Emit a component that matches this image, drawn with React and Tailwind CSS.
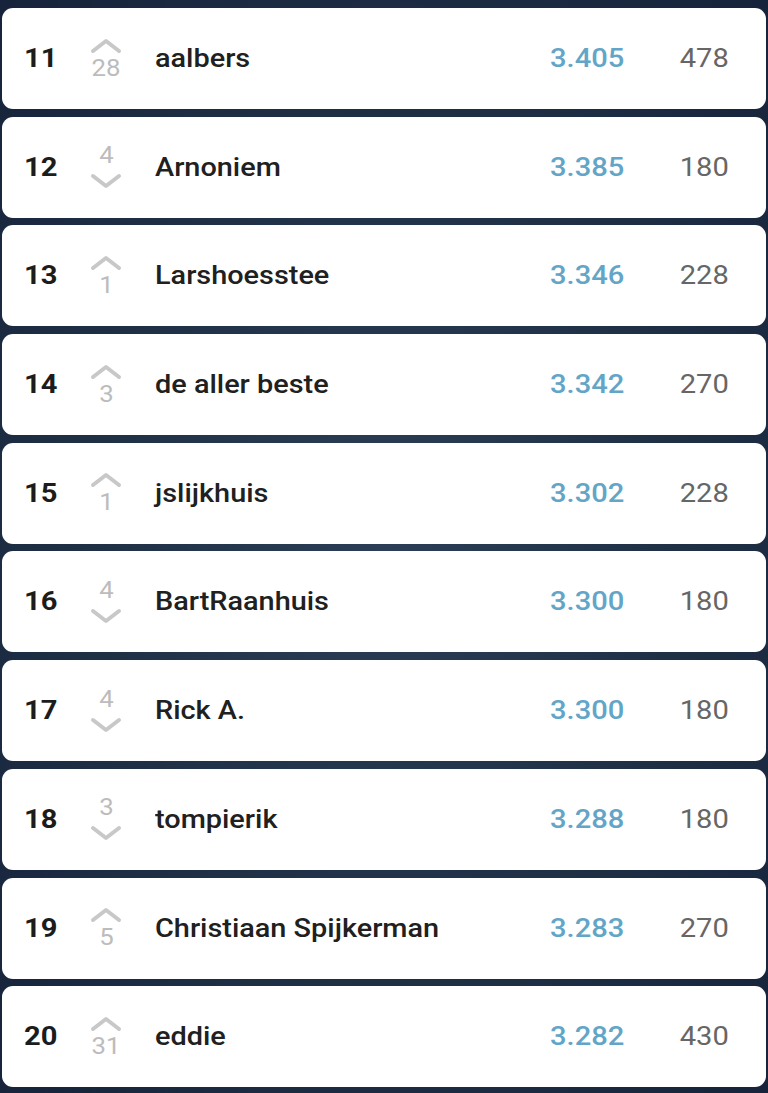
const ROWS = [
  { rank: 11, dir: 'up', delta: 28, name: 'aalbers', score: '3.405', pts: 478 },
  { rank: 12, dir: 'down', delta: 4, name: 'Arnoniem', score: '3.385', pts: 180 },
  { rank: 13, dir: 'up', delta: 1, name: 'Larshoesstee', score: '3.346', pts: 228 },
  { rank: 14, dir: 'up', delta: 3, name: 'de aller beste', score: '3.342', pts: 270 },
  { rank: 15, dir: 'up', delta: 1, name: 'jslijkhuis', score: '3.302', pts: 228 },
  { rank: 16, dir: 'down', delta: 4, name: 'BartRaanhuis', score: '3.300', pts: 180 },
  { rank: 17, dir: 'down', delta: 4, name: 'Rick A.', score: '3.300', pts: 180 },
  { rank: 18, dir: 'down', delta: 3, name: 'tompierik', score: '3.288', pts: 180 },
  { rank: 19, dir: 'up', delta: 5, name: 'Christiaan Spijkerman', score: '3.283', pts: 270 },
  { rank: 20, dir: 'up', delta: 31, name: 'eddie', score: '3.282', pts: 430 },
]

function Chevron({ up }) {
  return (
    <svg width="34" height="16" viewBox="0 0 34 16" fill="none">
      <path
        d={up ? 'M4 13 L17 3 L30 13' : 'M4 3 L17 13 L30 3'}
        stroke="#c8c8c8"
        strokeWidth="4"
        strokeLinecap="round"
        strokeLinejoin="round"
      />
    </svg>
  )
}

function Movement({ dir, delta }) {
  const up = dir === 'up'
  return (
    <div className="w-[36px] flex flex-col items-center justify-center">
      {up && <Chevron up />}
      <span className={`inline-block scale-x-[1.12] text-[23px] leading-[22px] text-[#bcbcbc] ${up ? 'mt-[4px]' : 'mb-[6px]'}`}>{delta}</span>
      {!up && <Chevron />}
    </div>
  )
}

function Row({ r }) {
  return (
    <div className="h-[101px] bg-white rounded-[11px] flex items-center pl-[22px] pr-[37px]">
      <div className="w-[64px]">
        <span className="inline-block origin-left scale-x-[1.12] text-[26px] font-bold text-[#1c1c1c]">{r.rank}</span>
      </div>
      <Movement dir={r.dir} delta={r.delta} />
      <div className="ml-[31px] flex-1">
        <span className="inline-block origin-left scale-x-[1.11] text-[26px] font-medium text-[#202020] whitespace-nowrap">{r.name}</span>
      </div>
      <div className="w-[110px] text-right">
        <span className="inline-block origin-right scale-x-[1.12] text-[26px] font-medium text-[#63a5c7]">{r.score}</span>
      </div>
      <div className="w-[105px] text-right">
        <span className="inline-block origin-right scale-x-[1.12] text-[26px] text-[#666666]">{r.pts}</span>
      </div>
    </div>
  )
}

export default function App() {
  return (
    <div
      className="min-h-[1093px] bg-[radial-gradient(ellipse_at_center,#2b3e55_0%,#1f3045_55%,#16233a_100%)] px-[2px] pt-[8px] flex flex-col gap-[7.7px]"
      style={{ fontFamily: 'Roboto, "Noto Sans", sans-serif' }}
    >
      {ROWS.map(r => <Row key={r.rank} r={r} />)}
    </div>
  )
}
